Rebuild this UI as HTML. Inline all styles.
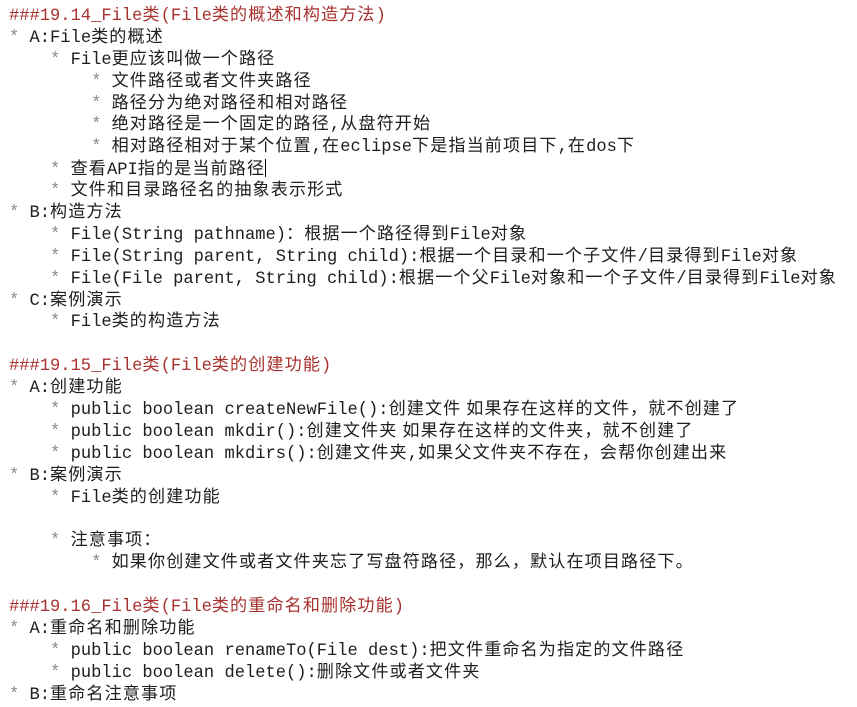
<!DOCTYPE html>
<html><head><meta charset="utf-8"><style>
html,body{margin:0;padding:0;background:#fff;width:857px;height:704px;overflow:hidden}
#w{position:absolute;left:9px;top:6px;font-family:"Liberation Mono","Noto Sans CJK SC",monospace;font-size:17.1px;line-height:21.9px;color:#1e1e1e;white-space:pre}
#w>div{height:21.9px;overflow:visible}
i{font-style:normal;letter-spacing:1.1px;font-family:"Noto Sans CJK SC","WenQuanYi Zen Hei",sans-serif;line-height:0}
.h{color:#a8322f}
.s{color:#8a8a8a}
.cur{display:inline-block;width:1px;height:18px;background:#000;vertical-align:-3px}
</style></head><body><div id="w"><div class="h">###19.14_File<i>类</i>(File<i>类的概述和构造方法</i>)</div><div><span class="s">*</span> A:File<i>类的概述</i></div><div>    <span class="s">*</span> File<i>更应该叫做一个路径</i></div><div>        <span class="s">*</span> <i>文件路径或者文件夹路径</i></div><div>        <span class="s">*</span> <i>路径分为绝对路径和相对路径</i></div><div>        <span class="s">*</span> <i>绝对路径是一个固定的路径</i>,<i>从盘符开始</i></div><div>        <span class="s">*</span> <i>相对路径相对于某个位置</i>,<i>在</i>eclipse<i>下是指当前项目下</i>,<i>在</i>dos<i>下</i></div><div>    <span class="s">*</span> <i>查看</i>API<i>指的是当前路径</i><span class="cur"></span></div><div>    <span class="s">*</span> <i>文件和目录路径名的抽象表示形式</i></div><div><span class="s">*</span> B:<i>构造方法</i></div><div>    <span class="s">*</span> File(String pathname)<i>：根据一个路径得到</i>File<i>对象</i></div><div>    <span class="s">*</span> File(String parent, String child):<i>根据一个目录和一个子文件</i>/<i>目录得到</i>File<i>对象</i></div><div>    <span class="s">*</span> File(File parent, String child):<i>根据一个父</i>File<i>对象和一个子文件</i>/<i>目录得到</i>File<i>对象</i></div><div><span class="s">*</span> C:<i>案例演示</i></div><div>    <span class="s">*</span> File<i>类的构造方法</i></div><div> </div><div class="h">###19.15_File<i>类</i>(File<i>类的创建功能</i>)</div><div><span class="s">*</span> A:<i>创建功能</i></div><div>    <span class="s">*</span> public boolean createNewFile():<i>创建文件 如果存在这样的文件，就不创建了</i></div><div>    <span class="s">*</span> public boolean mkdir():<i>创建文件夹 如果存在这样的文件夹，就不创建了</i></div><div>    <span class="s">*</span> public boolean mkdirs():<i>创建文件夹</i>,<i>如果父文件夹不存在，会帮你创建出来</i></div><div><span class="s">*</span> B:<i>案例演示</i></div><div>    <span class="s">*</span> File<i>类的创建功能</i></div><div> </div><div>    <span class="s">*</span> <i>注意事项：</i></div><div>        <span class="s">*</span> <i>如果你创建文件或者文件夹忘了写盘符路径，那么，默认在项目路径下。</i></div><div> </div><div class="h">###19.16_File<i>类</i>(File<i>类的重命名和删除功能</i>)</div><div><span class="s">*</span> A:<i>重命名和删除功能</i></div><div>    <span class="s">*</span> public boolean renameTo(File dest):<i>把文件重命名为指定的文件路径</i></div><div>    <span class="s">*</span> public boolean delete():<i>删除文件或者文件夹</i></div><div><span class="s">*</span> B:<i>重命名注意事项</i></div></div></body></html>
